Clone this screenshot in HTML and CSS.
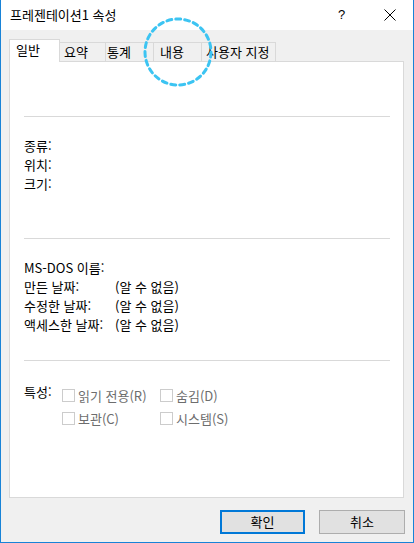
FILE: index.html
```html
<!DOCTYPE html>
<html lang="ko">
<head>
<meta charset="utf-8">
<title>프레젠테이션1 속성</title>
<link rel="stylesheet" href="styles.css">
</head>
<body>
<div class="window">
  <div class="titlebar">
    <span class="title">프레젠테이션1 속성</span>
    <span class="help">?</span>
    <svg class="close" width="12" height="12" viewBox="0 0 12 12"><path d="M0.5 0.5 L11.5 11.5 M11.5 0.5 L0.5 11.5" stroke="#000" stroke-width="1" fill="none"/></svg>
  </div>
  <div class="tabs">
    <div class="tab active">일반</div>
    <div class="tab t-summary">요약</div>
    <div class="tab t-stats">통계</div>
    <div class="tab t-contents">내용</div>
    <div class="tab t-custom">사용자 지정</div>
  </div>
  <div class="panel">
    <div class="sep first"></div>
    <div class="rows info">
      <div>종류:</div>
      <div>위치:</div>
      <div>크기:</div>
    </div>
    <div class="sep second"></div>
    <div class="rows dates">
      <div class="row"><span class="lbl">MS-DOS 이름:</span></div>
      <div class="row"><span class="lbl">만든 날짜:</span><span>(알 수 없음)</span></div>
      <div class="row"><span class="lbl">수정한 날짜:</span><span>(알 수 없음)</span></div>
      <div class="row"><span class="lbl">액세스한 날짜:</span><span>(알 수 없음)</span></div>
    </div>
    <div class="sep third"></div>
    <div class="attrs">
      <div class="attr-label">특성:</div>
      <label class="cb"><span class="box"></span>읽기 전용(R)</label>
      <label class="cb"><span class="box"></span>숨김(D)</label>
      <div></div>
      <label class="cb"><span class="box"></span>보관(C)</label>
      <label class="cb"><span class="box"></span>시스템(S)</label>
    </div>
  </div>
  <div class="buttons">
    <button class="btn default">확인</button>
    <button class="btn">취소</button>
  </div>
  <svg class="circle" width="76" height="76" viewBox="0 0 76 76"><circle cx="38" cy="38" r="33" fill="none" stroke="#3cc4f2" stroke-width="3" stroke-dasharray="5 4" stroke-linecap="round"/></svg>
</div>
</body>
</html>
```
FILE: styles.css
```css
html, body {
  margin: 0;
  padding: 0;
}
body {
  font-family: "Noto Sans CJK KR", "Noto Sans", sans-serif;
  font-size: 13px;
  color: #000;
  background: #fff;
}
.window {
  position: relative;
  width: 414px;
  height: 543px;
  box-sizing: border-box;
  background: #f0f0f0;
  border: 1px solid #1883d7;
  border-top: none;
  overflow: hidden;
}
.titlebar {
  height: 30px;
  background: #fff;
  display: flex;
  align-items: center;
  padding-left: 9px;
}
.title {
  flex: 1;
  line-height: 30px;
}
.help {
  font-family: "Liberation Sans", sans-serif;
  font-size: 13px;
  width: 16px;
  margin-right: 30px;
  line-height: 30px;
}
.close {
  margin-right: 17px;
}
.tabs {
  display: flex;
  align-items: flex-end;
  height: 23px;
  margin: 9px 0 0 8px;
}
.tab {
  box-sizing: border-box;
  height: 19px;
  margin-bottom: 1px;
  border: 1px solid #d9d9d9;
  border-left: none;
  border-bottom: none;
  background: #f0f0f0;
  line-height: 18px;
  white-space: nowrap;
}
.tab.active {
  position: relative;
  z-index: 1;
  width: 51px;
  height: 23px;
  margin-bottom: 0;
  border-left: 1px solid #d9d9d9;
  background: #fff;
  line-height: 20px;
  padding-left: 6px;
}
.t-summary { width: 46px; padding-left: 4px; }
.t-stats { width: 48px; padding-left: 1px; }
.t-contents { width: 48px; padding-left: 6px; }
.t-custom { width: 74px; padding-left: 4px; }
.panel {
  box-sizing: border-box;
  width: 395px;
  height: 437px;
  margin: -1px 0 0 8px;
  background: #fff;
  border: 1px solid #d9d9d9;
  padding: 0 13px 0 14px;
}
.sep {
  height: 1px;
  background: #d9d9d9;
}
.sep.first { margin-top: 54px; }
.sep.second { margin-top: 45px; }
.sep.third { margin-top: 26px; }
.rows {
  margin-top: 19px;
  line-height: 19px;
}
.rows > div {
  height: 19px;
}
.row {
  display: flex;
}
.lbl {
  width: 91px;
}
.attrs {
  display: grid;
  grid-template-columns: 38px 98px 1fr;
  grid-auto-rows: 23px;
  margin-top: 23px;
  line-height: 13px;
  align-items: center;
}
.attr-label {
  align-self: start;
  padding-top: 1px;
}
.cb {
  display: flex;
  align-items: center;
  color: #6d6d6d;
}
.box {
  box-sizing: border-box;
  width: 13px;
  height: 13px;
  border: 1px solid #cccccc;
  background: #fff;
  margin-right: 3px;
}
.buttons {
  display: flex;
  justify-content: flex-end;
  gap: 14px;
  margin-top: 12px;
  padding-right: 8px;
}
.btn {
  box-sizing: border-box;
  width: 86px;
  height: 24px;
  font-family: "Noto Sans CJK KR", sans-serif;
  font-size: 13px;
  color: #000;
  background: #e1e1e1;
  border: 1px solid #adadad;
  padding: 0;
  line-height: 20px;
}
.btn.default {
  width: 85px;
  border: 2px solid #0078d7;
}
.circle {
  position: absolute;
  left: 139px;
  top: 14px;
}
```
